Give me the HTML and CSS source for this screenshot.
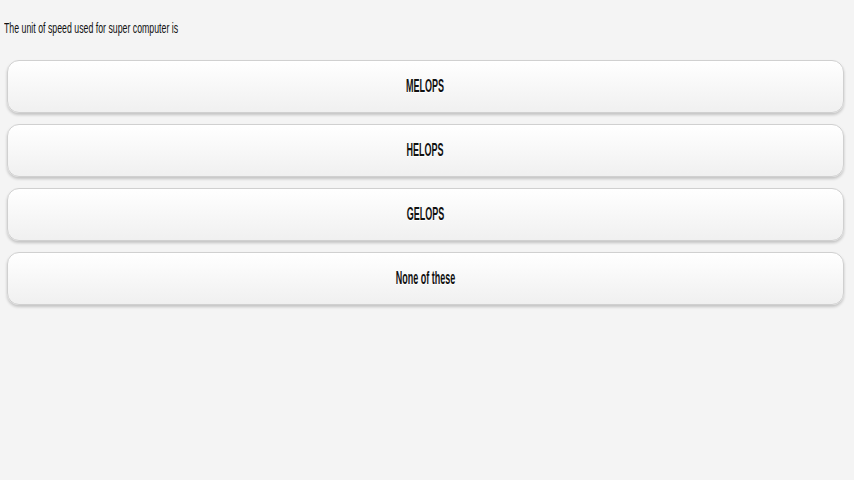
FILE: index.html
```html
<!DOCTYPE html>
<html>
<head>
<meta charset="utf-8">
<link rel="stylesheet" href="styles.css">
</head>
<body>
<div class="page">
  <p class="question"><span class="squeeze">The unit of speed used for super computer is</span></p>
  <div class="options">
    <button class="option"><span class="squeeze">MELOPS</span></button>
    <button class="option"><span class="squeeze">HELOPS</span></button>
    <button class="option"><span class="squeeze">GELOPS</span></button>
    <button class="option"><span class="squeeze">None of these</span></button>
  </div>
</div>
</body>
</html>
```
FILE: styles.css
```css
html, body {
  margin: 0;
  padding: 0;
  background: #f4f4f4;
  width: 854px;
  height: 480px;
  overflow: hidden;
}
.page {
  font-family: "Liberation Sans", Arial, sans-serif;
  color: #111;
  padding: 0 10px 0 7px;
}
.question {
  margin: 0 0 0 -3px;
  padding: 19px 0 0 0;
  height: 60px;
  box-sizing: border-box;
  font-size: 15px;
  line-height: 17px;
}
.squeeze {
  display: inline-block;
  transform: scaleX(0.585);
  transform-origin: left center;
  white-space: nowrap;
}
.options {
  display: flex;
  flex-direction: column;
  gap: 11px;
}
.option {
  display: flex;
  align-items: center;
  justify-content: center;
  height: 53px;
  width: 100%;
  box-sizing: border-box;
  border: 1px solid #d0d0d0;
  border-radius: 12px;
  background: linear-gradient(#ffffff, #f0f0f0);
  box-shadow: 0 2px 3px rgba(0,0,0,0.2);
  font-family: "Liberation Sans", Arial, sans-serif;
  font-weight: bold;
  font-size: 18px;
  color: #111;
  padding: 0;
  text-shadow: 0 1px 0 #fff;
}
.option .squeeze {
  transform: scaleX(0.5);
  transform-origin: center center;
}
```
